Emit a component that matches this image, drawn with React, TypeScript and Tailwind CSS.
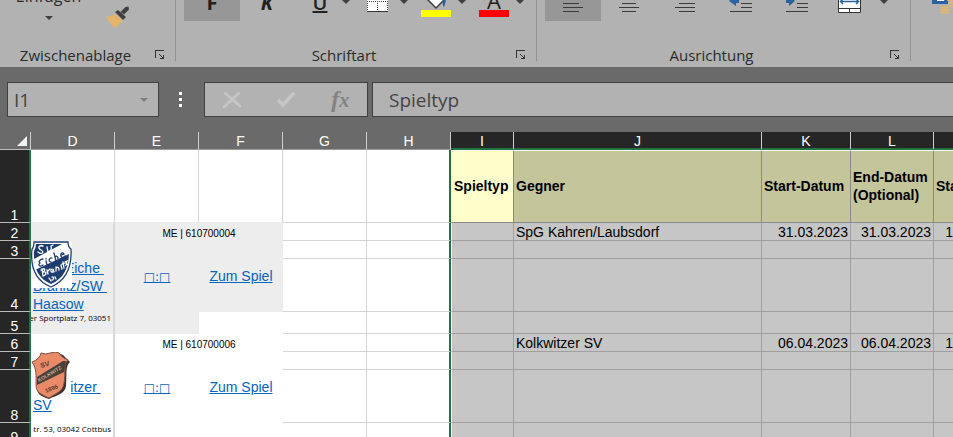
import React from "react";

const uiFont = "font-['Open_Sans','Noto_Sans',sans-serif]";

function Caret({ className = "fill-[#404040]" }: { className?: string }) {
  return (
    <svg viewBox="0 0 8 4" className={`h-1 w-2 shrink-0 ${className}`} aria-hidden="true">
      <path d="M0 0h8L4 4z" />
    </svg>
  );
}

function Launcher({ label }: { label: string }) {
  return (
    <button type="button" aria-label={label} className="flex h-6 w-6 shrink-0 items-center pl-1">
      <svg viewBox="0 0 10 10" className="h-2.5 w-2.5" aria-hidden="true" shapeRendering="crispEdges">
        <path d="M0.5 8V0.5H9" fill="none" stroke="#333" />
        <path d="M4 4h1v1h1v1h1v1h1V5h1v4H5V8h2V7H6V6H5V5H4z" fill="#333" />
      </svg>
    </button>
  );
}

function Group({ label, width, children }: { label: string; width: string; children: React.ReactNode }) {
  return (
    <section aria-label={label} className={`flex h-[91px] shrink-0 ${width}`}>
      <div className="flex min-w-0 flex-1 flex-col justify-between">
        <div className="flex">{children}</div>
        <div className="flex h-6">
          <span className="flex-1 text-center text-[15px] leading-6 text-[#2b2b2b]">{label}</span>
          <Launcher label={`${label} öffnen`} />
        </div>
      </div>
      <div className="h-[85px] w-px bg-[#929292]" />
    </section>
  );
}

function Tool({ label, active, width = "w-14", children }: { label: string; active?: boolean; width?: string; children: React.ReactNode }) {
  return (
    <button type="button" aria-label={label} className={`flex h-[45px] shrink-0 items-end justify-center ${width} ${active ? "bg-[#979797]" : ""}`}>
      {children}
    </button>
  );
}

function Split({ label, children }: { label: string; children: React.ReactNode }) {
  return (
    <div className="flex">
      <Tool label={label} width="w-10">{children}</Tool>
      <button type="button" aria-label={`${label} Optionen`} className="flex h-[45px] w-3 items-center justify-center pt-1.5">
        <Caret />
      </button>
    </div>
  );
}

function Lines({ d }: { d: string }) {
  return (
    <svg viewBox="0 -24 20 45" className="h-[45px] w-5" shapeRendering="crispEdges" aria-hidden="true">
      <path d={d} stroke="#3a3a3a" fill="none" />
    </svg>
  );
}

function Ribbon() {
  return (
    <div className="flex h-[67px] items-end overflow-hidden bg-[#b2b2b2]">
      <Group label="Zwischenablage" width="w-[176px]">
        <button type="button" className="flex h-[45px] w-[97px] flex-col items-center gap-2 pt-2 text-[16px] text-[#2b2b2b]">
          <span className="leading-6">Einfügen</span>
          <Caret />
        </button>
        <button type="button" aria-label="Format übertragen" className="flex h-[52px] w-11 items-end pl-2">
          <svg viewBox="0 0 25 22" className="h-[22px] w-[25px]" aria-hidden="true">
            <path d="M1 10c4 1 7-1 9-2l8 7-8 7C6 19 3 15 1 10z" fill="#e3b56b" />
            <path d="m10 6 3-2 8 7-3 3z" fill="#404040" />
            <path d="m15.500 6 5-5 3-.5.5 3-5 5z" fill="#404040" />
          </svg>
        </button>
      </Group>

      <Group label="Schriftart" width="w-[361px]">
        <div className="flex gap-1.5 pl-2 text-xl leading-6 text-[#222]">
          <div className="flex">
            <Tool label="Fett" active><span className="pb-1.5 font-bold">F</span></Tool>
            <Tool label="Kursiv" width="w-[54px]"><span className="pb-1.5 font-bold italic">K</span></Tool>
          </div>
          <Split label="Unterstrichen"><span className="pb-1.5 font-semibold underline">U</span></Split>
          <Split label="Rahmen">
            <svg viewBox="0 -24 22 45" className="h-[45px] w-[22px]" shapeRendering="crispEdges" aria-hidden="true">
              <path d="M0-9h21v20H0z" fill="#fff" />
              <path d="M.5-9v20M20.500-9v20M10.500-9v20M0 1.500h21" stroke="#444" strokeDasharray="1 1" />
              <path d="M0 11.500h21" stroke="#333" />
            </svg>
          </Split>
          <Split label="Füllfarbe">
            <svg viewBox="0 -24 30 45" className="h-[45px] w-[30px]" aria-hidden="true">
              <path d="m7 0 8-8 8 8-8 8z" fill="#fff" stroke="#404040" strokeWidth="1.500" />
              <path d="M21-4c4 0 5 4 2 11-2-2-1-5-1-7z" fill="#2b62a0" />
              <path d="M0 10h30v7H0z" fill="#ff0" />
            </svg>
          </Split>
          <Split label="Schriftfarbe">
            <span className="flex w-[30px] flex-col items-center pb-1">
              <span className="text-[22px] leading-5">A</span>
              <span className="h-[7px] w-full bg-[#f00]" />
            </span>
          </Split>
        </div>
      </Group>

      <Group label="Ausrichtung" width="w-[374px]">
        <div className="flex pl-2">
          <Tool label="Linksbündig" active><Lines d="M0 3.500h16M0 7.500h20M0 11.500h16" /></Tool>
          <Tool label="Zentriert"><Lines d="M3 3.500h14M0 7.500h20M3 11.500h14" /></Tool>
          <Tool label="Rechtsbündig"><Lines d="M4 3.500h16M0 7.500h20M4 11.500h16" /></Tool>
          <Tool label="Einzug verkleinern">
            <svg viewBox="0 -24 24 45" className="h-[45px] w-6" aria-hidden="true">
              <path d="M0 1l6-6v4h4v4H7v3z" fill="#2b62a0" />
              <path d="M12 3.500h11M12 7.500h11M1 11.500h22" stroke="#3a3a3a" />
            </svg>
          </Tool>
          <Tool label="Einzug vergrößern">
            <svg viewBox="0 -24 24 45" className="h-[45px] w-6" aria-hidden="true">
              <path d="M10 1 4-5v4H1v4h3v3z" fill="#2b62a0" />
              <path d="M12 3.500h11M12 7.500h11M1 11.500h22" stroke="#3a3a3a" />
            </svg>
          </Tool>
          <Tool label="Verbinden und zentrieren" width="w-12">
            <svg viewBox="0 -24 24 45" className="h-[45px] w-6" aria-hidden="true">
              <path d="M1.500-10.500h22v23h-22z" fill="#fff" stroke="#333" />
              <path d="M1 8.500h22M12.500 9v3" stroke="#333" />
              <path d="M4 1.500h17M6-1 3.500 1.500 6 4M19-1l2.500 2.500L19 4" stroke="#2b62a0" strokeWidth="1.500" fill="none" />
            </svg>
          </Tool>
          <button type="button" aria-label="Verbinden Optionen" className="flex h-[45px] w-[22px] items-center justify-center pt-1.5">
            <Caret />
          </button>
        </div>
      </Group>

      <section aria-label="Zahl" className="flex h-[91px] flex-1 overflow-hidden pl-5">
        <button type="button" aria-label="Buchhaltungsformat" className="h-[45px] w-8 shrink-0">
          <svg viewBox="0 -24 32 45" className="h-[45px] w-8" aria-hidden="true">
            <path d="M1-10h26V4H1z" fill="#2b62a0" />
            <path d="M6-6h16v7H6z" fill="#fff" />
            <path d="M13 1h4V-2h-3z" fill="#2b62a0" />
            <path d="M17-4h12V8H17z" fill="#b2b2b2" />
            <path d="M17 0h10M18 3h10M19 6h9M10.500 7.500h6M10 10h8M10.500 12.500h7" stroke="#e3b56b" strokeWidth="1.800" strokeLinecap="round" />
          </svg>
        </button>
      </section>
    </div>
  );
}

function FormulaBar() {
  return (
    <div className="flex items-center bg-[#6a6a6a] py-[15px] pl-[7px]">
      <div className="flex h-[35px] w-[152px] shrink-0 items-center border border-[#404040] bg-[#b2b2b2] pr-2.5">
        <input aria-label="Namenfeld" defaultValue="I1" className="min-w-0 flex-1 bg-transparent pl-1.5 text-[19px] leading-6 text-[#444] outline-none" />
        <button type="button" aria-label="Namen anzeigen"><Caret className="fill-[#7c7f82]" /></button>
      </div>
      <div className="flex w-[45px] shrink-0 flex-col items-center gap-[3px] pr-0.5">
        <span className="h-[3px] w-[3px] bg-white" />
        <span className="h-[3px] w-[3px] bg-white" />
        <span className="h-[3px] w-[3px] bg-white" />
      </div>
      <div className="flex h-[35px] w-[164px] shrink-0 items-center justify-around border border-[#404040] bg-[#b2b2b2]">
        <button type="button" aria-label="Abbrechen">
          <svg viewBox="0 0 18 16" className="h-4 w-[18px]" aria-hidden="true">
            <path d="m2 1 15 13M16 1 1 15" stroke="#c6c6c6" strokeWidth="2.500" strokeLinecap="round" />
          </svg>
        </button>
        <button type="button" aria-label="Eingeben">
          <svg viewBox="0 0 20 17" className="h-[17px] w-5" aria-hidden="true">
            <path d="m2 9 5 5L18 2" stroke="#c6c6c6" strokeWidth="3.500" fill="none" />
          </svg>
        </button>
        <button type="button" aria-label="Funktion einfügen" className="font-['Liberation_Serif',serif] text-2xl leading-6 font-bold italic text-[#838383]">
          f<span className="text-xl">x</span>
        </button>
      </div>
      <input aria-label="Bearbeitungsleiste" defaultValue="Spieltyp" className="ml-1 h-[35px] min-w-0 flex-1 border-y border-l border-[#404040] bg-[#b2b2b2] pl-4 text-[19px] leading-6 text-[#444] outline-none" />
    </div>
  );
}

function EicheCrest() {
  return (
    <svg viewBox="0 0 41 47" className="absolute top-0 left-0 h-[47px] w-[41px]" role="img" aria-label="Eiche Branitz">
      <path d="M0 0h41v47H0z" fill="#fff" />
      <path d="M3 1h34q0 5 3 7c1 18-4 31-20 38C5 40-1 27 1 8q2-2 2-7z" fill="#fff" stroke="#1d3c70" strokeWidth="1.300" />
      <path d="M5 3h30q1 5 3 7c0 15-4 27-18 33C8 38 2 28 3 10q2-3 2-7z" fill="#1d3c70" />
      <path d="M3 18 31 3h4l3 7v3L4 29z" fill="#fff" />
      <g fill="none" strokeLinecap="round" stroke="#1d3c70" strokeWidth="1.300">
        <path d="M12 18c-3 0-5 3-3 4-2 1-1 5 3 2M15 20l1 4M15 17.500v.5M21 17c-3-1-4 4-1 4M23 12l2 8m-1-4c2-2 3 0 3 2M30 14l3-1c-1-2-4-1-3 2s3 1 4 0" />
      </g>
      <g fill="none" strokeLinecap="round" stroke="#fff" strokeWidth="1.300">
        <path d="M12 5c-4-1-6 2-2 4s1 5-3 2M16 6l1 5c3-1 4-3 3-6l2-1" />
        <path d="M11 28l1 7m-2-6c4-3 5 0 2 2 4-1 4 3 0 4M16 29l1 4m0-3 2-2M21 28c-2 1-1 4 1 3v-3l1 3M25 26v4m0-3c2-2 3 0 3 2M30 24l1 4M32 21l1 6m-2-4 3-1M34 21l2-1-1 4 2-1" />
        <path d="m18 37 2 3M21 36c2-1 2 3 0 3M24 36l1 2" />
      </g>
    </svg>
  );
}

function KolkwitzCrest() {
  return (
    <svg viewBox="0 0 41 48" className="absolute top-0 left-0 h-12 w-[41px]" role="img" aria-label="SV Kolkwitz 1896">
      <path d="M0 0h40v48H0z" fill="#fff" />
      <path d="M3 11Q10 3 19 3q9-3 13 0l7 7c-5 4-3 13-4 24-1 8-9 9-17 13C9 44 6 42 6 35 5 26 7 18 3 11z" fill="#3a302b" />
      <path d="M1 10Q9 7 10 1q5 2 9 0 6-2 9 0 3 5 9 7c-5 5-2 13-4 23-1 9-8 10-15 15C9 42 5 40 5 33 5 24 6 17 1 10z" fill="#e98a68" stroke="#805044" />
      <path d="M6 25 32 9h3l-2 11L6 33z" fill="#4b4039" />
      <g fontFamily="Liberation Sans, sans-serif" fontWeight="bold">
        <text x="10" y="16" fontSize="7" fill="#633a30" transform="rotate(-16 10 16)">SV</text>
        <text x="8" y="30" fontSize="5" fill="#c5aa98" transform="rotate(-30 8 30)">KOLKWITZ</text>
        <text x="15" y="41" fontSize="6" fill="#633a30" transform="rotate(-22 15 41)">1896</text>
      </g>
    </svg>
  );
}

const link = "text-[#0563c1] underline whitespace-pre";
const rowHead = "border-r-2 border-b border-r-[#217346] border-b-[#bdbdbd] bg-[#262626] p-0 text-center align-bottom font-normal leading-[14px] text-white";
const colHead = "border-r border-b border-r-[#cfcfcf] border-b-[#9b9b9b] p-0 pt-0.5 font-normal leading-[15px] text-white";
const colHeadSel = "border-r border-b-2 border-r-[#cfcfcf] border-b-[#217346] bg-[#262626] p-0 pt-0.5 font-normal leading-[14px] text-white";
const titleCell = "border-r border-b border-t border-t-white border-r-[#8a8a8a] border-b-[#8a8a8a] bg-[#c5c59c] p-0 pb-0.5 pl-0.5 text-left align-middle font-bold leading-[18px] text-black";
const selCell = "border-r border-b border-[#a0a0a0] bg-[#c6c6c6] p-0 pt-0.5 leading-[15px]";

// Empty worksheet cells G and H, left of the selected range.
function PlainCells() {
  return (
    <>
      <td className="border-r border-b border-[#d4d4d4] p-0" />
      <td className="border-r-2 border-b border-r-[#217346] border-b-[#d4d4d4] p-0" />
    </>
  );
}

function SelectedCells({ opponent, date, extra }: { opponent?: string; date?: string; extra?: string }) {
  return (
    <>
      <td className={`${selCell} border-l border-l-white`} />
      <td className={`${selCell} pl-0.5`}>{opponent}</td>
      <td className={`${selCell} pr-0.5 text-right`}>{date}</td>
      <td className={`${selCell} pr-0.5 text-right`}>{date}</td>
      <td className="border-b border-[#a0a0a0] bg-[#c6c6c6] p-0 pt-0.5 text-right leading-[15px]">{extra}</td>
    </>
  );
}

type Match = {
  first: number;
  shade: string;
  number: string;
  opponent: string;
  team: string;
  date: string;
  venue: string;
  crest: React.ReactNode;
  pad: string;
};

const matches: Match[] = [
  { first: 2, shade: "bg-[#ededed]", number: "610700004", opponent: "SpG Kahren/Laubsdorf", team: "SpG Eiche \nBranitz/SW \nHaasow", date: "31.03.2023", venue: "er Sportplatz 7, 03051", crest: <EicheCrest />, pad: "pt-[18px]" },
  { first: 6, shade: "bg-white", number: "610700006", opponent: "Kolkwitzer SV", team: "Kolkwitzer \nSV", date: "06.04.2023", venue: "tr. 53, 03042 Cottbus", crest: <KolkwitzCrest />, pad: "pt-[26px]" },
];

function MatchRows({ m }: { m: Match }) {
  const dCell = `border-r-2 border-[#d8d8d8] p-0 ${m.shade}`;
  return (
    <>
      <tr className="h-[18px]">
        <th scope="row" className={rowHead}>{m.first}</th>
        <td className={dCell} />
        <td colSpan={2} className={`p-0 pt-1 text-center text-[10px] leading-3 ${m.shade}`}>ME | {m.number}</td>
        <PlainCells />
        <SelectedCells opponent={m.opponent} date={m.date} extra="1" />
      </tr>
      <tr className="h-[18px]">
        <th scope="row" className={rowHead}>{m.first + 1}</th>
        <td rowSpan={2} className={`${dCell} align-top`}>
          <div className={`relative h-[71px] pl-0.5 leading-[18px] ${m.pad}`}>
            <a href="#team" className={link}>{m.team}</a>
            {m.crest}
          </div>
        </td>
        <td rowSpan={2} className={`p-0 pb-0.5 text-center align-middle ${m.shade}`}>
          <a href="#ergebnis" className={`${link} font-['DejaVu_Sans',sans-serif] text-xs`}>□:□</a>
        </td>
        <td rowSpan={2} className={`p-0 pb-0.5 text-center align-middle ${m.shade}`}>
          <a href="#spiel" className={link}>Zum Spiel</a>
        </td>
        <PlainCells />
        <SelectedCells />
      </tr>
      <tr className="h-[53px]">
        <th scope="row" className={rowHead}>{m.first + 2}</th>
        <PlainCells />
        <SelectedCells />
      </tr>
      <tr className="h-[22px]">
        <th scope="row" className={rowHead}>{m.first + 3}</th>
        <td className={`${dCell} align-top`}>
          <div className="flex justify-end overflow-hidden pr-0.5 font-['Open_Sans',sans-serif] text-[8px] leading-3 whitespace-nowrap">{m.venue}</div>
        </td>
        <td className={`p-0 ${m.shade}`} />
        <td className="p-0" />
        <PlainCells />
        <SelectedCells />
      </tr>
    </>
  );
}

function Sheet() {
  return (
    <table className="w-full table-fixed border-separate border-spacing-0 bg-white font-['Liberation_Sans',Arial,sans-serif] text-sm text-black">
      <colgroup>
        <col className="w-[31px]" />
        <col className="w-[84px]" />
        <col className="w-[84px]" />
        <col className="w-[84px]" />
        <col className="w-[84px]" />
        <col className="w-[84px]" />
        <col className="w-[63px]" />
        <col className="w-[248px]" />
        <col className="w-[89px]" />
        <col className="w-[83px]" />
        <col />
      </colgroup>
      <thead>
        <tr className="h-[18px] bg-[#6a6a6a]">
          <td className="border-r border-b border-r-[#cfcfcf] border-b-[#bdbdbd] p-0">
            <svg viewBox="0 0 10 10" className="mr-[3px] ml-auto h-2.5 w-2.5" aria-hidden="true">
              <path d="M10 0v10H0z" fill="#f2f2f2" />
            </svg>
          </td>
          {["D", "E", "F", "G", "H"].map((c) => <th key={c} scope="col" className={colHead}>{c}</th>)}
          {["I", "J", "K", "L"].map((c) => <th key={c} scope="col" className={colHeadSel}>{c}</th>)}
          <td className="border-b-2 border-[#217346] bg-[#262626] p-0" />
        </tr>
      </thead>
      <tbody>
        <tr className="h-[73px]">
          <th scope="row" className={rowHead}>1</th>
          <td className="border-r border-b border-r-[#d4d4d4] border-b-[#ededed] p-0" />
          <td className="border-r border-b border-r-[#d4d4d4] border-b-[#ededed] p-0" />
          <td className="border-r border-b border-r-[#d4d4d4] border-b-[#ededed] p-0" />
          <PlainCells />
          <td className="border border-t-white border-r-[#8a8a8a] border-b-[#8a8a8a] border-l-white bg-[#ffffcc] p-0 pb-0.5 pl-0.5 align-middle leading-[18px] font-bold">Spieltyp</td>
          <td className={titleCell}>Gegner</td>
          <td className={titleCell}>Start-Datum</td>
          <td className={titleCell}>End-Datum (Optional)</td>
          <td className="overflow-hidden border-t border-b border-t-white border-b-[#8a8a8a] bg-[#c5c59c] p-0 pb-0.5 pl-0.5 align-middle leading-[18px] font-bold">Sta</td>
        </tr>
        {matches.map((m) => <MatchRows key={m.first} m={m} />)}
      </tbody>
    </table>
  );
}

export default function App() {
  return (
    <main className={`h-screen overflow-hidden bg-white ${uiFont}`}>
      <Ribbon />
      <FormulaBar />
      <Sheet />
    </main>
  );
}
